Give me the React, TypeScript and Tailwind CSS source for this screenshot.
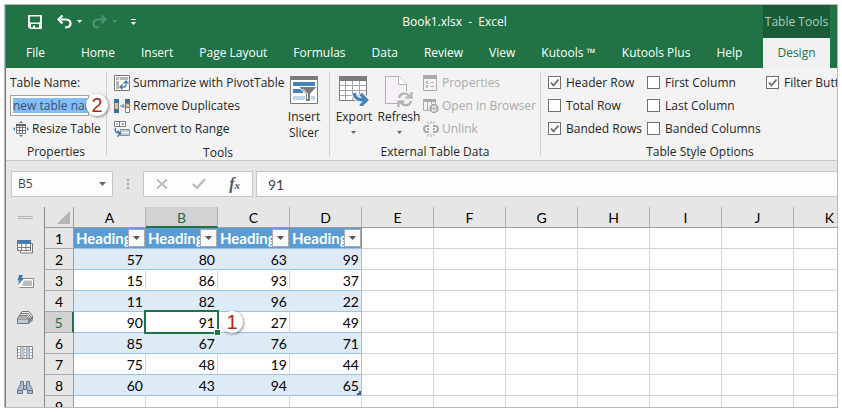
import type { ReactNode } from "react";

const UI = "font-['Open_Sans','Noto_Sans',sans-serif]";
const SHEET = "font-['Lato','Open_Sans',sans-serif]";

function Icon({ w, h, children, className = "" }: { w: number; h: number; children: ReactNode; className?: string }) {
  return (
    <svg width={w} height={h} viewBox={`0 0 ${w} ${h}`} fill="none" aria-hidden="true" className={`shrink-0 ${className}`}>
      {children}
    </svg>
  );
}

function Caret({ className = "" }: { className?: string }) {
  return (
    <Icon w={7} h={4} className={className}>
      <path d="M0 0H7L3.500 4Z" fill="currentColor" />
    </Icon>
  );
}

function SmallCaret({ className = "" }: { className?: string }) {
  return (
    <Icon w={5} h={3} className={className}>
      <path d="M0 0H5L2.500 3Z" fill="currentColor" />
    </Icon>
  );
}

function SaveIcon() {
  return (
    <Icon w={14} h={14}>
      <path d="M0 0H14V14H2L0 12Z M2 1.500V6.500L3 7.500H11L12 6.500V1.500Z M3 9V12.500H5V10.500H7V12.500H11V9Z" fill="#f3f3f3" fillRule="evenodd" />
    </Icon>
  );
}

function UndoIcon({ flip = false }: { flip?: boolean }) {
  return (
    <Icon w={15} h={14} className={flip ? "-scale-x-100" : ""}>
      <path d="M5.500 0.500L1.500 4.500L5.500 8.500M2 4.500H9C12 4.500 13.500 6.500 13.500 8.500C13.500 11 11.500 12.500 8 12.500" stroke="currentColor" strokeWidth="2.200" />
    </Icon>
  );
}

function PivotIcon() {
  return (
    <Icon w={16} h={16}>
      <path d="M0.500 0.500H15.500V15.500H0.500Z" fill="#fff" stroke="#7a7a7a" />
      <path d="M2 2H5V5H2ZM6 2H14V5H6ZM2 6H5V14H2Z" fill="#b5b5b5" />
      <path d="M6 12H10.500Q12 12 12 10V7M8.500 9.500L6 12L8.500 14.500M9.500 8.500L12 6L14.500 8.500" stroke="#3d7ab8" strokeWidth="1.300" />
    </Icon>
  );
}

function DuplicatesIcon() {
  return (
    <Icon w={16} h={16}>
      <path d="M0.500 1.500H4.500V14.500H0.500Z" fill="#e6c27a" stroke="#777" />
      <path d="M0 1H5V5H0Z M0 11H5V15H0Z" fill="#3c6fa5" />
      <path d="M6 8H10M8.500 6L10.500 8L8.500 10" stroke="#3d7ab8" />
      <path d="M11.500 1.500H15.500V14.500H11.500Z" fill="#fff" stroke="#777" />
      <path d="M11 1H16V5H11Z" fill="#3c6fa5" />
      <path d="M12 5H15V9H12Z" fill="#e6c27a" />
      <path d="M11 9.500H16M11 5.500H16" stroke="#777" />
    </Icon>
  );
}

function ConvertIcon() {
  return (
    <Icon w={16} h={16}>
      <path d="M0.500 0.500H11.500V5.500H0.500ZM5.500 0.500V5.500" fill="#fff" stroke="#7a7a7a" />
      <path d="M2 3H4" stroke="#777" />
      <path d="M7 2.500H10.500L8.700 4.500Z" fill="#777" />
      <path d="M6.500 8.500H15.500V14.500H6.500Z" fill="#b8d0e8" stroke="#8a8a8a" />
      <path d="M7 11.500H15" stroke="#fff" />
      <path d="M1.500 7C0.500 11 3 12.500 6 12.500M3.500 9.500L6.500 12.500L3.500 15.500" stroke="#3d7ab8" strokeWidth="1.500" />
    </Icon>
  );
}

function ResizeIcon() {
  return (
    <Icon w={16} h={16}>
      <path d="M3.500 3.500H12.500V12.500H3.500ZM6.500 4V12M9.500 4V12M4 6.500H12M4 9.500H12" fill="#fff" stroke="#666" strokeWidth="0.900" />
      <path d="M3 3H13V5H3Z" fill="#666" />
      <path d="M8 0L10 2H6ZM8 16L10 14H6ZM0 8L2 6V10ZM16 8L14 6V10Z" fill="#3d7ab8" />
    </Icon>
  );
}

function SlicerIcon() {
  return (
    <Icon w={28} h={28}>
      <path d="M0.500 0.500H27.500V27.500H0.500Z" fill="#fff" stroke="#7b7b7b" />
      <path d="M0 0H28V4H0Z" fill="#7b7b7b" />
      <path d="M3 6H25V10H3ZM3 13H13V17H3Z" fill="#4482bd" />
      <path d="M3 20H25V24H3Z" fill="#bcd3ec" />
      <path d="M8.500 10.500H27L20.500 18V25.500H15.500V18Z" fill="#7b7b7b" stroke="#fff" />
      <path d="M13 13L17.500 18V23" stroke="#fff" />
    </Icon>
  );
}

function ExportIcon() {
  return (
    <Icon w={30} h={30}>
      <path d="M0.500 0.500H27.500V24.500H0.500Z" fill="#fff" stroke="#7b7b7b" />
      <path d="M0 0H28V5H0Z" fill="#7b7b7b" />
      <path d="M6.500 5V24M13.500 5V24M20.500 5V24M1 9.500H27M1 14.500H27M1 19.500H27" stroke="#a5a5a5" />
      <path d="M15 17C16 23 20 24 27 24M21.500 17.500L28 24L21.500 30" stroke="#f3f3f3" strokeWidth="6" />
      <path d="M15 17C16 23 20 24 27 24M21.500 18L27.500 24L21.500 30" stroke="#4482bd" strokeWidth="3.400" />
    </Icon>
  );
}

function RefreshIcon() {
  return (
    <Icon w={28} h={31}>
      <path d="M0.500 0.500H14L21.500 8V27.500H0.500Z" fill="#f6f1f8" stroke="#b0b0b0" />
      <path d="M13.500 0.500V8.500H21.500" fill="#fff" stroke="#b0b0b0" />
      <circle cx="20" cy="23.500" r="8" fill="#f3f3f3" />
      <path d="M14 22C15 17 21 16 24.500 20M26.500 16V21.500H20.500M26 25C25 30 19 30.500 15.500 26.500M13.500 31V25.500H19.500" stroke="#b0b0b0" strokeWidth="2.200" />
    </Icon>
  );
}

function PropertiesIcon() {
  return (
    <Icon w={14} h={16}>
      <path d="M0.500 1.500H13.500V15.500H0.500Z" fill="#f8f4f8" stroke="#aaa" />
      <path d="M0 0H14V4H0Z" fill="#aaa" />
      <path d="M7.500 7.500H11M7.500 11.500H11" stroke="#aaa" />
      <circle cx="4" cy="7.500" r="1.200" stroke="#aaa" />
      <circle cx="4" cy="11.500" r="1.200" fill="#aaa" />
    </Icon>
  );
}

function BrowserIcon() {
  return (
    <Icon w={16} h={16}>
      <path d="M0.500 1.500H12.500V12.500H0.500ZM4.500 3V12M8.500 3V12" fill="#f8f4f8" stroke="#aaa" />
      <path d="M0 1H13V4H0Z" fill="#aaa" />
      <circle cx="11" cy="10.500" r="5" fill="#f3f3f3" />
      <circle cx="11" cy="10.500" r="4" stroke="#a3a3a3" strokeWidth="1.300" />
      <path d="M7 10.500H15M11 6.500V14.500M9 7.500Q7.500 10.500 9 13.500M13 7.500Q14.500 10.500 13 13.500" stroke="#a3a3a3" strokeWidth="0.800" />
    </Icon>
  );
}

function UnlinkIcon() {
  return (
    <Icon w={16} h={16}>
      <path d="M6 5H3.500Q1 5 1 8Q1 11 3.500 11H6M10 5H12.500Q15 5 15 8Q15 11 12.500 11H10M4 8H6M10 8H12" stroke="#aaa" strokeWidth="2" />
      <path d="M4 0.500L6 3M8 0V3M12 0.500L10 3M4 15.500L6 13M8 16V13M12 15.500L10 13" stroke="#aaa" />
    </Icon>
  );
}

function TablesIcon() {
  return (
    <Icon w={16} h={14}>
      <path d="M3.500 3.500H15.500V13H3.500Z" fill="#fff" stroke="#777" />
      <path d="M0.500 0.500H13.500V10.500H0.500ZM4.500 4V10M9 4V10M1 7.500H13" fill="#fff" stroke="#777" />
      <path d="M0 0H14V4H0Z" fill="#4e7ba8" />
    </Icon>
  );
}

function FlashIcon() {
  return (
    <Icon w={17} h={14}>
      <path d="M4.500 3.500H16.500V12.500H2.500" fill="#fff" stroke="#888" />
      <path d="M7 5.500H15V11H5Z" fill="#b9bcbf" />
      <path d="M2 0H6L4.500 3.500H7L0.500 10L2.500 5.500H0.500Z" fill="#3f76b0" />
    </Icon>
  );
}

function StackIcon() {
  return (
    <Icon w={16} h={13}>
      <path d="M0.500 7.500L5 0.500H12L15.500 5V9L12 12.500H0.500Z" fill="#e9e9e9" stroke="#777" />
      <path d="M4 2.500H11L14.500 7M3 4.500H10.500L13.500 8.500M2 6H10L12 9" stroke="#777" />
      <path d="M0.500 8H11.500V12.500H0.500Z" fill="#c2ccd6" stroke="#777" />
      <path d="M11.500 8L15.500 5V9L11.500 12.500Z" fill="#888" />
    </Icon>
  );
}

function ColumnsIcon() {
  return (
    <Icon w={16} h={13}>
      <path d="M0.500 0.500H15.500V12.500H0.500Z" fill="#fff" stroke="#888" />
      <path d="M4 1H6.500V12H4ZM9.500 1H12V12H9.500Z" fill="#adc8e2" />
      <path d="M3.500 1V12M7 1V12M9.500 1V12M12.500 1V12M1 3.500H3M1 6.500H3M1 9.500H3M7 3.500H9M7 6.500H9M7 9.500H9M13 3.500H15M13 6.500H15M13 9.500H15" stroke="#999" strokeWidth="0.800" />
    </Icon>
  );
}

function BinocularsIcon() {
  return (
    <Icon w={16} h={13}>
      <path d="M3.500 0.500H6.500V4.500H9.500V0.500H12.500V3L15.500 9V12.500H10.500V8.500H5.500V12.500H0.500V9L3.500 3Z" fill="#a9bccd" stroke="#687b8c" />
      <path d="M6.500 4V9M9.500 4V9M1 9.500H5M11 9.500H15" stroke="#687b8c" />
    </Icon>
  );
}

function Badge({ n, className }: { n: number; className: string }) {
  return (
    <span className={`absolute z-10 flex size-[22px] items-center justify-center rounded-full bg-white font-['Liberation_Sans',sans-serif] text-[20px] leading-none text-[#ad2a16] shadow-[1px_1px_3px_rgba(0,0,0,0.45)] ${className}`}>
      {n}
    </span>
  );
}

function Command({ icon, label, disabled = false }: { icon: ReactNode; label: string; disabled?: boolean }) {
  return (
    <button type="button" disabled={disabled} className={`flex h-[23px] items-center gap-[3px] whitespace-nowrap ${disabled ? "text-[#ababab]" : ""}`}>
      <span className="flex w-4 justify-start">{icon}</span>
      {label}
    </button>
  );
}

function BigCommand({ icon, children }: { icon: ReactNode; children: ReactNode }) {
  return (
    <button type="button" className="flex flex-col items-center pt-[5px] leading-4">
      <span className="flex h-[33px] items-start">{icon}</span>
      {children}
    </button>
  );
}

function Group({ title, className, children }: { title: string; className: string; children: ReactNode }) {
  return (
    <section className={`relative flex shrink-0 flex-col ${className}`}>
      <div className="flex h-[73px] pt-[3px]">{children}</div>
      <h2 className="pt-1 text-center leading-4">{title}</h2>
    </section>
  );
}

function Divider() {
  return <div className="mt-1 h-[84px] w-px shrink-0 bg-[#d2d2d2]" />;
}

function Check({ label, checked = false }: { label: string; checked?: boolean }) {
  return (
    <label className="flex h-[23px] items-center gap-[5px] whitespace-nowrap">
      <span className="grid">
        <input type="checkbox" defaultChecked={checked} className="peer col-start-1 row-start-1 size-[13px] appearance-none border border-[#707070] bg-white" />
        <Icon w={13} h={13} className="pointer-events-none col-start-1 row-start-1 hidden peer-checked:block">
          <path d="M3 6.500L5.500 9.500L10.500 3.500" stroke="#666" strokeWidth="1.700" />
        </Icon>
      </span>
      {label}
    </label>
  );
}

const tabs = ["File", "Home", "Insert", "Page Layout", "Formulas", "Data", "Review", "View", "Kutools ™", "Kutools Plus", "Help"];
const columns = ["A", "B", "C", "D", "E", "F", "G", "H", "I", "J", "K", "L", "M", "N", "O", "P", "Q", "R", "S", "T"];
const rows = [
  [57, 80, 63, 99],
  [15, 86, 93, 37],
  [11, 82, 96, 22],
  [90, 91, 27, 49],
  [85, 67, 76, 71],
  [75, 48, 19, 44],
  [60, 43, 94, 65],
];

function RowHead({ n, active = false }: { n: number; active?: boolean }) {
  return (
    <th
      scope="row"
      className={`h-[21px] border-b border-b-[#a8a8a8] px-0 pt-[2px] pb-0 font-normal leading-[18px] ${active ? "border-r-2 border-r-[#217346] bg-[#d2d2d2] text-[#217346]" : "border-r border-r-[#9b9b9b] bg-[#e6e6e6]"}`}
    >
      {n}
    </th>
  );
}

function Sheet() {
  const blanks = columns.slice(4);
  return (
    <table className={`w-[1469px] table-fixed border-separate border-spacing-0 bg-white text-[14px] text-black ${SHEET}`}>
      <colgroup>
        <col className="w-[29px]" />
        {columns.map((c) => (
          <col key={c} className="w-[72px]" />
        ))}
      </colgroup>
      <thead>
        <tr>
          <td className="h-[21px] border-r border-b border-[#9b9b9b] bg-[#e6e6e6] p-0">
            <Icon w={13} h={13} className="ml-3">
              <path d="M13 0V13H0Z" fill="#b4b4b4" />
            </Icon>
          </td>
          {columns.map((c) => (
            <th
              key={c}
              scope="col"
              className={`h-[21px] border-r border-r-[#b0b0b0] px-0 pt-[2px] pb-0 font-normal ${c === "B" ? "border-b-2 border-b-[#217346] bg-[#d2d2d2] leading-[17px] text-[#217346]" : "border-b border-b-[#9b9b9b] bg-[#e6e6e6] leading-[18px]"}`}
            >
              {c}
            </th>
          ))}
        </tr>
      </thead>
      <tbody>
        <tr>
          <RowHead n={1} />
          {columns.slice(0, 4).map((c) => (
            <td key={c} className="h-[21px] border-b border-[#9bc2e6] bg-[#5b9bd5] p-0 text-[15px] font-bold text-white">
              <div className="flex h-5 items-center justify-between pr-px pl-[2px] leading-5">
                <span className="min-w-0 flex-1 overflow-hidden whitespace-nowrap">Heading</span>
                <button type="button" aria-label={`Filter column ${c}`} className="flex h-[18px] w-[17px] shrink-0 items-center justify-center border border-[#ababab] bg-[#f9fafb] text-[#595959]">
                  <Caret />
                </button>
              </div>
            </td>
          ))}
          {blanks.map((c) => (
            <td key={c} className="h-[21px] border-r border-b border-[#d4d4d4] p-0" />
          ))}
        </tr>
        {rows.map((row, r) => (
          <tr key={r}>
            <RowHead n={r + 2} active={r === 3} />
            {row.map((value, c) => (
              <td
                key={c}
                className={`relative h-[21px] border-r border-b border-b-[#9bc2e6] pt-[2px] pr-[2px] pb-0 pl-0 text-right leading-[18px] ${r % 2 === 0 ? "bg-[#ddebf7]" : "bg-white"} ${c === 3 ? "border-r-[#9bc2e6]" : r % 2 === 0 ? "border-r-[#ddebf7]" : "border-r-[#d4d4d4]"}`}
              >
                {value}
                {r === 3 && c === 1 && (
                  <>
                    <span className="absolute -inset-0.5 z-10 border-2 border-[#217346]" />
                    <span className="absolute -right-1 -bottom-1 z-10 size-[7px] border border-white bg-[#217346]" />
                    <Badge n={1} className="-top-px left-full ml-1" />
                  </>
                )}
                {r === 6 && c === 3 && (
                  <Icon w={4} h={4} className="absolute right-0 bottom-0">
                    <path d="M2 0H4V4H0V2H2Z" fill="#3f57ad" />
                  </Icon>
                )}
              </td>
            ))}
            {blanks.map((c) => (
              <td key={c} className="h-[21px] border-r border-b border-[#d4d4d4] p-0" />
            ))}
          </tr>
        ))}
        <tr>
          <th scope="row" className="border-r border-[#9b9b9b] bg-[#e6e6e6] p-0 font-normal leading-[22px]">
            <div className="h-[11px] overflow-hidden">9</div>
          </th>
          {columns.map((c) => (
            <td key={c} className="border-r border-[#d4d4d4] p-0" />
          ))}
        </tr>
      </tbody>
    </table>
  );
}

export default function App() {
  return (
    <div className={`bg-white p-1 text-[12px] text-[#262626] ${UI}`}>
      <main className="overflow-hidden border border-[#b9b9b9]">
        <div className="border-l border-[#7b7b7b]">
          <header className="bg-[#217346] text-white">
            <div className="flex h-[33px] items-stretch">
              <div className="flex w-[140px] shrink-0 items-center pl-[22px]">
                <button type="button" aria-label="Save"><SaveIcon /></button>
                <button type="button" aria-label="Undo" className="ml-[15px] flex items-center gap-[5px]"><UndoIcon /><SmallCaret /></button>
                <button type="button" aria-label="Redo" disabled className="ml-[10px] flex items-center gap-[5px] text-[#4f9470]"><UndoIcon flip /><SmallCaret /></button>
                <button type="button" aria-label="Customize toolbar" className="ml-[14px]">
                  <Icon w={5} h={6}><path d="M0 0H5V1H0ZM0 3H5L2.500 6Z" fill="#fff" /></Icon>
                </button>
              </div>
              <h1 className="flex-1 self-center text-center whitespace-pre">Book1.xlsx  -  Excel</h1>
              <div className="mr-[7px] flex w-[67px] items-center justify-center bg-[#1b5c38] whitespace-nowrap text-[#a9cdb8]">Table Tools</div>
            </div>
            <nav className="flex h-[30px] items-stretch pl-5">
              <div className="flex items-center gap-[26px] whitespace-nowrap">
                {tabs.map((t) => (
                  <button key={t} type="button" className="first:mr-[10px]">{t}</button>
                ))}
              </div>
              <button type="button" className="mr-[7px] ml-auto w-[67px] shrink-0 bg-[#f1f1f1] text-[#217346]">Design</button>
            </nav>
          </header>

          <div className="flex h-[93px] border-b border-[#c6c6c6] bg-[#f3f3f3]">
            <Group title="Properties" className="w-[100px]">
              <div className="flex flex-col pl-1">
                <label htmlFor="table-name" className="flex h-[23px] items-center">Table Name:</label>
                <div className="my-px w-[79px] border border-[#a0a0a0] bg-white py-[2px] pl-[2px]">
                  <input id="table-name" defaultValue="new table name" className="block h-[15px] w-full bg-[#83bdf9] text-[#40506a] outline-none" />
                </div>
                <div className="pl-[3px]"><Command icon={<ResizeIcon />} label="Resize Table" /></div>
              </div>
              <Badge n={2} className="top-[26px] left-[80px]" />
            </Group>
            <Divider />
            <Group title="Tools" className="w-[222px]">
              <div className="w-[175px] shrink-0 pl-[7px]">
                <Command icon={<PivotIcon />} label="Summarize with PivotTable" />
                <Command icon={<DuplicatesIcon />} label="Remove Duplicates" />
                <Command icon={<ConvertIcon />} label="Convert to Range" />
              </div>
              <div className="flex w-[44px] justify-center">
                <BigCommand icon={<SlicerIcon />}><span>Insert</span><span>Slicer</span></BigCommand>
              </div>
            </Group>
            <Divider />
            <Group title="External Table Data" className="w-[210px]">
              <div className="flex w-[48px] shrink-0 justify-center">
                <BigCommand icon={<ExportIcon />}><span>Export</span><SmallCaret className="mt-[6px] text-[#666]" /></BigCommand>
              </div>
              <div className="flex w-[42px] shrink-0 justify-center">
                <BigCommand icon={<RefreshIcon />}><span>Refresh</span><SmallCaret className="mt-[6px] text-[#666]" /></BigCommand>
              </div>
              <div className="pl-[3px]">
                <Command disabled icon={<PropertiesIcon />} label="Properties" />
                <Command disabled icon={<BrowserIcon />} label="Open in Browser" />
                <Command disabled icon={<UnlinkIcon />} label="Unlink" />
              </div>
            </Group>
            <Divider />
            <Group title="Table Style Options" className="w-[318px]">
              <div className="w-[106px] shrink-0 pl-[7px]">
                <Check label="Header Row" checked />
                <Check label="Total Row" />
                <Check label="Banded Rows" checked />
              </div>
              <div className="w-[119px] shrink-0">
                <Check label="First Column" />
                <Check label="Last Column" />
                <Check label="Banded Columns" />
              </div>
              <div>
                <Check label="Filter Button" checked />
              </div>
            </Group>
          </div>

          <div className="flex h-[46px] items-start bg-[#e6e6e6] pt-[10px] pl-[5px]">
            <button type="button" className="flex h-[26px] w-[102px] shrink-0 items-center justify-between border border-[#c6c6c6] bg-[#fdfdfd] pr-[6px] pl-[6px] text-[#444]">
              B5 <Caret className="text-[#666]" />
            </button>
            <Icon w={30} h={26}>
              <path d="M14 8H16V10H14ZM14 12H16V14H14ZM14 16H16V18H14Z" fill="#a8a8a8" />
            </Icon>
            <div className="flex h-[26px] w-[110px] shrink-0 items-center justify-between border border-[#c6c6c6] bg-[#fdfdfd] px-[12px]">
              <button type="button" aria-label="Cancel">
                <Icon w={12} h={10}><path d="M1 0.500L11 9.500M11 0.500L1 9.500" stroke="#b8b8b8" strokeWidth="1.700" /></Icon>
              </button>
              <button type="button" aria-label="Enter">
                <Icon w={14} h={12}><path d="M1 6L5 10L13 1" stroke="#b8b8b8" strokeWidth="2.200" /></Icon>
              </button>
              <button type="button" aria-label="Insert function" className="font-['Liberation_Serif',serif] text-[16px] leading-4 font-bold text-[#555] italic">
                f<span className="text-[11px]">x</span>
              </button>
            </div>
            <input aria-label="Formula" defaultValue="91" className={`ml-[3px] h-[26px] min-w-0 flex-1 border border-r-0 border-[#c6c6c6] bg-[#fdfdfd] pl-[11px] text-[14px] text-[#444] outline-none ${SHEET}`} />
          </div>

          <div className="flex">
            <aside className="flex w-[39px] shrink-0 flex-col items-center border-r border-[#8a8a8a] bg-[#e6e6e6] pt-[9px]">
              <div className="h-[3px] w-[15px] border-y border-[#b5b5b5]" />
              <div className="mt-[21px] flex flex-col gap-[21px]">
                <button type="button" aria-label="Tables" className="flex h-[14px] items-center"><TablesIcon /></button>
                <button type="button" aria-label="Quick fill" className="flex h-[14px] items-center"><FlashIcon /></button>
                <button type="button" aria-label="Workbooks" className="flex h-[14px] items-center"><StackIcon /></button>
                <button type="button" aria-label="Column list" className="flex h-[14px] items-center"><ColumnsIcon /></button>
                <button type="button" aria-label="Find" className="flex h-[14px] items-center"><BinocularsIcon /></button>
              </div>
            </aside>
            <div className="min-w-0 flex-1 overflow-hidden">
              <Sheet />
            </div>
          </div>
        </div>
      </main>
    </div>
  );
}
